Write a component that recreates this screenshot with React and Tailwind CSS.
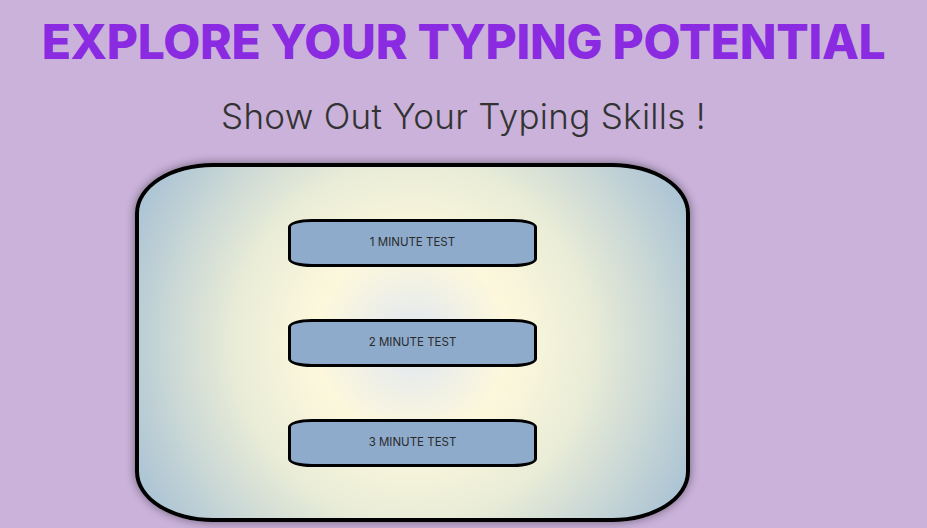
export default function App() {
  const tests = ["1 MINUTE TEST", "2 MINUTE TEST", "3 MINUTE TEST"]

  return (
    <div className="min-h-screen w-full bg-[#cab2da] overflow-hidden" style={{ fontFamily: "Inter, 'Noto Sans', sans-serif" }}>
      <h1 className="pt-[14px] text-center whitespace-nowrap text-[48px] leading-[56px] font-extrabold text-[#8a2be2] tracking-[-0.3px]">
        EXPLORE YOUR TYPING POTENTIAL
      </h1>
      <p className="mt-[26px] text-center text-[35px] leading-[40px] font-light text-[#333] tracking-[0.3px]">
        Show Out Your Typing Skills !
      </p>

      {/* test picker card */}
      <div
        className="mt-[27px] ml-[135px] w-[555px] h-[359px] border-4 border-black rounded-[14%] shadow-[0_0_10px_rgba(0,0,0,0.45)] flex flex-col items-center pt-[52px] gap-[52px]"
        style={{
          background:
            "radial-gradient(circle at 50% 50%, #dfe6f2 0%, #fdf8dc 30%, #e9ecd7 55%, #a3bed4 100%)",
        }}
      >
        {tests.map((t) => (
          <button
            key={t}
            className="w-[249px] h-[48px] bg-[#8eabcc] border-[3px] border-black rounded-[24px/8px] text-[11.5px] text-[#2a2a2a] font-normal"
          >
            {t}
          </button>
        ))}
      </div>
    </div>
  )
}
